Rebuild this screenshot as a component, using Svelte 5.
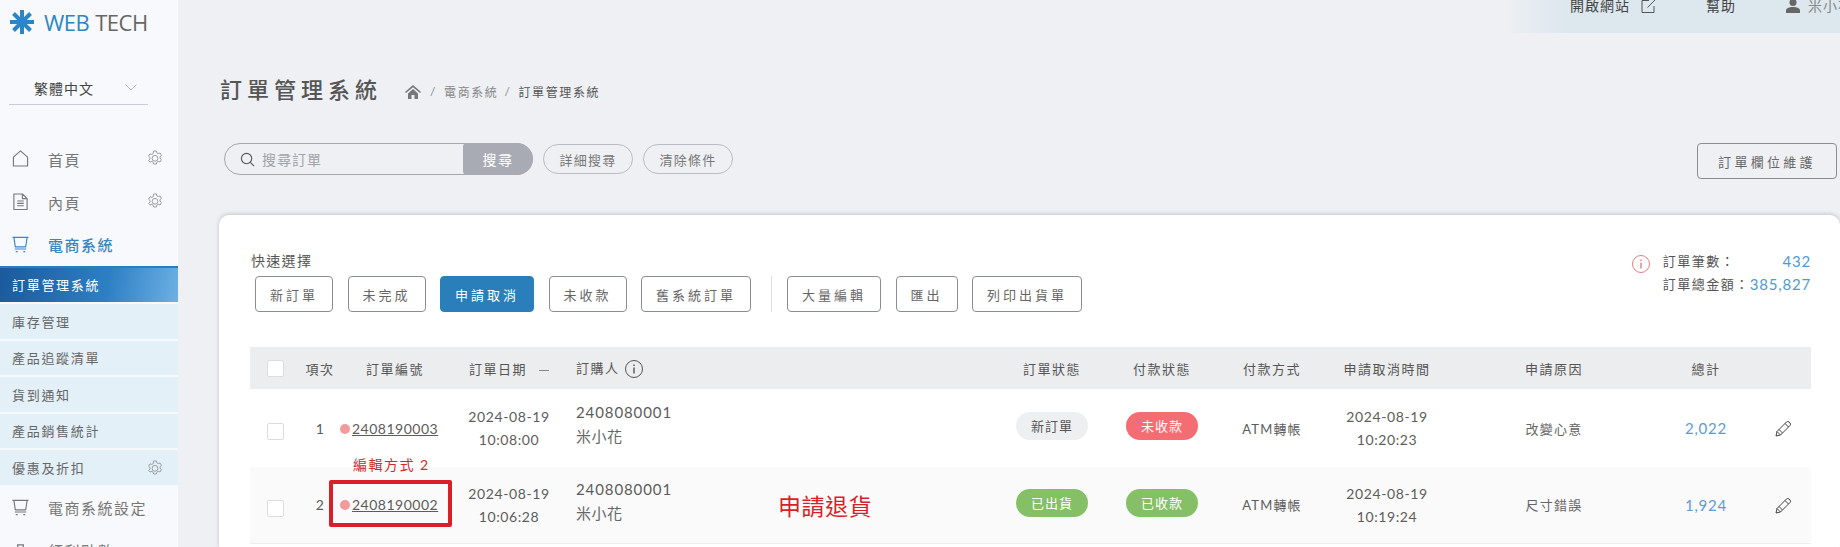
<script>
  const topMenu = [
    { name: '首頁', icon: 'home', gear: true },
    { name: '內頁', icon: 'doc', gear: true },
    { name: '電商系統', icon: 'cart', open: true }
  ];
  const subMenu = [
    { name: '訂單管理系統', active: true },
    { name: '庫存管理' },
    { name: '產品追蹤清單' },
    { name: '貨到通知' },
    { name: '產品銷售統計' },
    { name: '優惠及折扣', gear: true }
  ];
  const quick = ['新訂單', '未完成', '申請取消', '未收款', '舊系統訂單'];
  const tools = ['大量編輯', '匯出', '列印出貨單'];
  const rows = [
    {
      no: 1, order: '2408190003', date: '2024-08-19', time: '10:08:00', buyer: '2408080001', name: '米小花',
      status: '新訂單', statusCls: 'gray', pay: '未收款', payCls: 'red', method: 'ATM轉帳',
      cdate: '2024-08-19', ctime: '10:20:23', reason: '改變心意', total: '2,022'
    },
    {
      no: 2, order: '2408190002', date: '2024-08-19', time: '10:06:28', buyer: '2408080001', name: '米小花',
      status: '已出貨', statusCls: 'green', pay: '已收款', payCls: 'green', method: 'ATM轉帳',
      cdate: '2024-08-19', ctime: '10:19:24', reason: '尺寸錯誤', total: '1,924', marked: true
    }
  ];
</script>

{#snippet gear()}
  <svg class="gear" viewBox="0 0 16 16" fill="none" stroke="#9a9da3" stroke-width="1">
    <path d="M6.6 1h2.8l.4 1.8 1.4.8 1.8-.6 1.4 2.4-1.4 1.3v1.6l1.4 1.3-1.4 2.4-1.8-.6-1.4.8-.4 1.8H6.6l-.4-1.8-1.4-.8-1.8.6L1.6 10.4 3 9.1V7.5L1.6 6.2 3 3.8l1.8.6 1.4-.8z" />
    <circle cx="8" cy="8.3" r="2.9" />
  </svg>
{/snippet}

{#snippet menuIcon(kind)}
  <svg class="micon" viewBox="0 0 18 18" fill="none" stroke="currentColor" stroke-width="1.200" stroke-linejoin="round">
    {#if kind === 'home'}
      <path d="M1.500 7.500L9 1l7.500 6.500V17h-15z" />
    {:else if kind === 'doc'}
      <path d="M2 1h9l5 5v11.500H2z M11 1v5h5 M5.500 8.500h7 M5.500 11h7 M5.500 13.500h7" />
    {:else}
      <path d="M.5 1.500h17 M2 1.500l1.500 10h11l1.500-10 M3 13.800h12 M4 16.500h2 M12 16.500h2" />
    {/if}
  </svg>
{/snippet}

<div class="page">
  <aside class="sidebar">
    <div class="logo">
      <svg class="logo-mark" viewBox="0 0 24 24" fill="none" stroke="#2c85c5" stroke-width="4">
        <path d="M12 0v24 M0 12h24 M3.500 3.500l17 17 M20.500 3.500l-17 17" />
      </svg>
      <span class="web">WEB</span><span class="tech">TECH</span>
    </div>

    <div class="lang">
      <span>繁體中文</span>
      <svg viewBox="0 0 12 7" fill="none" stroke="#b8bcc4" stroke-width="1"><path d="M.5.500L6 6l5.500-5.500" /></svg>
    </div>

    <nav class="menu">
      {#each topMenu as item}
        <div class="menu-item" class:open={item.open}>
          {@render menuIcon(item.icon)}
          <span>{item.name}</span>
          {#if item.gear}{@render gear()}{/if}
        </div>
      {/each}

      <ul class="submenu">
        {#each subMenu as item}
          <li class:active={item.active}>
            <span>{item.name}</span>
            {#if item.gear}{@render gear()}{/if}
          </li>
        {/each}
      </ul>

      <div class="menu-item">
        {@render menuIcon('cart')}
        <span>電商系統設定</span>
      </div>
      <div class="menu-item">
        <svg class="micon" viewBox="0 0 18 18" fill="none" stroke="currentColor" stroke-width="1.300">
          <path d="M1 6h16v11H1z M6 6V3h6v3 M1 10h16" />
        </svg>
        <span>紅利點數</span>
      </div>
    </nav>
  </aside>

  <main class="main">
    <div class="topbar">
      <span class="top-link">開啟網站
        <svg viewBox="0 0 15 15" fill="none" stroke="#555" stroke-width="1"><path d="M8 1.500H1v12h12V7 M6.500 8.500L14 1" /></svg>
      </span>
      <span class="top-link help">幫助</span>
      <span class="top-user">
        <svg viewBox="0 0 14 14" fill="#666"><circle cx="7" cy="3.500" r="3.500" /><path d="M0 14v-2.500C0 9.500 3 8 7 8s7 1.500 7 3.500V14z" /></svg>
        米小花
      </span>
    </div>

    <div class="heading">
      <h1>訂單管理系統</h1>
      <div class="crumbs">
        <svg viewBox="0 0 16 14" fill="#777"><path d="M8 0l8 7-1 1-7-5.800L1 8 0 7z M3 8.500L8 4l5 4.500V14H9.500v-4h-3v4H3z" /></svg>
        <span class="sep">/</span>
        <span class="crumb">電商系統</span>
        <span class="sep">/</span>
        <span class="crumb current">訂單管理系統</span>
      </div>
    </div>

    <div class="toolbar">
      <div class="search">
        <div class="search-input">
          <svg viewBox="0 0 16 16" fill="none" stroke="#555" stroke-width="1.200"><circle cx="7" cy="7" r="5.500" /><path d="M11 11l4 4" /></svg>
          <span>搜尋訂單</span>
        </div>
        <div class="search-btn">搜尋</div>
      </div>
      <button class="pill">詳細搜尋</button>
      <button class="pill">清除條件</button>
      <button class="outline columns">訂單欄位維護</button>
    </div>

    <section class="card">
      <div class="card-top">
        <div class="quick">
          <div class="quick-label">快速選擇</div>
          <div class="quick-btns">
            {#each quick as q}
              <button class="outline" class:current={q === '申請取消'}>{q}</button>
            {/each}
            <span class="divider"></span>
            {#each tools as t}
              <button class="outline">{t}</button>
            {/each}
          </div>
        </div>
        <div class="summary">
          <svg viewBox="0 0 18 18" fill="none" stroke="#e07f84" stroke-width="1"><circle cx="9" cy="9" r="8.500" /><path d="M9 7.500v6 M9 4.500v1.500" stroke-width="1.400" /></svg>
          <dl>
            <dt>訂單筆數：</dt><dd>432</dd>
            <dt>訂單總金額：</dt><dd>385,827</dd>
          </dl>
        </div>
      </div>

      <table>
        <colgroup>
          <col style="width:50px" /><col style="width:40px" /><col style="width:110px" /><col style="width:118px" />
          <col style="width:432px" /><col style="width:104px" /><col style="width:116px" /><col style="width:104px" />
          <col style="width:126px" /><col style="width:208px" /><col style="width:96px" /><col style="width:57px" />
        </colgroup>
        <thead>
          <tr>
            <th><span class="check"></span></th>
            <th>項次</th>
            <th>訂單編號</th>
            <th>訂單日期 <span class="sort"></span></th>
            <th class="left">訂購人
              <svg class="info" viewBox="0 0 18 18" fill="none" stroke="#555" stroke-width="1"><circle cx="9" cy="9" r="8.500" /><path d="M9 7.500v6 M9 4.500v1.500" stroke-width="1.400" /></svg>
            </th>
            <th>訂單狀態</th>
            <th>付款狀態</th>
            <th>付款方式</th>
            <th>申請取消時間</th>
            <th>申請原因</th>
            <th>總計</th>
            <th></th>
          </tr>
        </thead>
        <tbody>
          {#each rows as r}
            <tr class:marked={r.marked}>
              <td><span class="check"></span></td>
              <td class="no">{r.no}</td>
              <td class="order-cell">
                {#if r.marked}
                  <span class="note-label">編輯方式 2</span>
                  <span class="note-box"></span>
                {/if}
                <span class="dot"></span><span class="order">{r.order}</span>
              </td>
              <td class="stack">{r.date}<br />{r.time}</td>
              <td class="left buyer-cell">
                <div class="buyer">{r.buyer}</div>
                <div class="buyer-name">{r.name}</div>
                {#if r.marked}<span class="note-refund">申請退貨</span>{/if}
              </td>
              <td><span class="badge {r.statusCls}">{r.status}</span></td>
              <td><span class="badge {r.payCls}">{r.pay}</span></td>
              <td class="plain">{r.method}</td>
              <td class="stack">{r.cdate}<br />{r.ctime}</td>
              <td class="plain reason">{r.reason}</td>
              <td class="total">{r.total}</td>
              <td>
                <svg class="edit" viewBox="0 0 16 16" fill="none" stroke="#444" stroke-width="1">
                  <path d="M1 15l1-4.500L11.500 1a1.800 1.800 0 0 1 2.500 0l1 1a1.800 1.800 0 0 1 0 2.500L5.500 14z M2 10.500L5.500 14 M4 8.500L7.500 12 M10 2.500l3.500 3.500" />
                </svg>
              </td>
            </tr>
          {/each}
        </tbody>
      </table>
    </section>
  </main>
</div>

<style>
  :global(body) {
    margin: 0;
    background: #eef0f4;
  }

  .page {
    display: flex;
    width: 1840px;
    height: 547px;
    overflow: hidden;
    font-family: Lato, "Noto Sans CJK TC", sans-serif;
    color: #555;
  }

  /* sidebar */
  .sidebar {
    flex: 0 0 178px;
    background: #f7f9fc;
    overflow: hidden;
  }

  .logo {
    display: flex;
    align-items: center;
    height: 44px;
    padding-left: 10px;
    font-family: "Open Sans", sans-serif;
    font-size: 22px;
    letter-spacing: -0.5px;
  }

  .logo-mark {
    width: 24px;
    height: 24px;
    margin-right: 10px;
  }

  .web {
    color: #2e86c1;
    margin-right: 6px;
  }

  .tech {
    color: #666;
  }

  .lang {
    display: flex;
    align-items: center;
    justify-content: space-between;
    box-sizing: border-box;
    width: 139px;
    height: 34px;
    margin: 27px 0 0 9px;
    padding: 0 11px 0 25px;
    border-bottom: 1px solid #c9ccd4;
    font-size: 14px;
    letter-spacing: 1px;
    color: #444;
  }

  .lang svg {
    width: 12px;
    height: 7px;
  }

  .menu {
    margin-top: 32px;
  }

  .menu-item {
    display: flex;
    align-items: center;
    position: relative;
    height: 43px;
    padding-left: 12px;
    font-size: 15px;
    letter-spacing: 1.500px;
    color: #777;
  }

  .menu-item span {
    margin-left: 19px;
    margin-top: 1px;
  }

  .menu-item.open {
    color: #3a87bd;
    font-weight: 500;
  }

  .menu-item.open span {
    margin-top: 0;
  }

  .micon {
    width: 17px;
    height: 17px;
    flex: none;
  }

  .gear {
    position: absolute;
    right: 15px;
    top: 13px;
    width: 16px;
    height: 16px;
  }

  .submenu {
    list-style: none;
    margin: 0 0 -1px;
    padding: 0;
  }

  .submenu li {
    display: flex;
    align-items: center;
    position: relative;
    box-sizing: border-box;
    height: 34.500px;
    margin-bottom: 2px;
    padding-left: 12px;
    background: #e3f0f8;
    font-size: 13px;
    letter-spacing: 1.700px;
    color: #666;
  }

  .submenu li .gear {
    top: 10px;
  }

  .submenu li.active {
    height: 36px;
    padding-bottom: 1px;
    background: linear-gradient(100deg, #1b5a9b 0%, #2d7fc4 60%, #6db0e4 100%);
    border-top: 2px solid #2a7fba;
    color: #fff;
  }

  /* main column */
  .main {
    flex: 1;
    min-width: 0;
  }

  .topbar {
    display: flex;
    align-items: flex-end;
    justify-content: flex-end;
    box-sizing: border-box;
    width: 335px;
    height: 33px;
    margin-left: auto;
    padding-bottom: 17px;
    overflow: hidden;
    background: linear-gradient(90deg, rgba(220, 231, 238, 0) 0%, #dce7ee 18%);
    font-size: 14px;
    letter-spacing: 1px;
    line-height: 20px;
    color: #444;
    white-space: nowrap;
  }

  .top-link {
    display: flex;
    align-items: center;
    gap: 11px;
    margin-right: 50px;
  }

  .top-link svg {
    width: 15px;
    height: 15px;
  }

  .top-user {
    display: flex;
    align-items: center;
    gap: 8px;
    width: 54px;
    color: #888;
  }

  .top-user svg {
    flex: none;
    width: 14px;
    height: 14px;
  }

  .heading {
    display: flex;
    align-items: center;
    height: 44px;
    margin-top: 33px;
    padding-left: 42px;
  }

  h1 {
    margin: 0;
    font-size: 22px;
    font-weight: 500;
    letter-spacing: 5px;
    color: #555;
  }

  .crumbs {
    display: flex;
    align-items: center;
    margin: 7px 0 0 23px;
    font-size: 12px;
    letter-spacing: 1.600px;
    color: #888;
  }

  .crumbs svg {
    width: 16px;
    height: 14px;
    margin-right: 9px;
  }

  .sep {
    margin-right: 7px;
  }

  .crumb {
    margin-right: 6px;
  }

  .crumb.current {
    color: #555;
  }

  .toolbar {
    display: flex;
    align-items: flex-start;
    height: 36px;
    margin-top: 33px;
    padding: 0 3px 0 46px;
  }

  .search {
    display: flex;
    box-sizing: border-box;
    width: 309px;
    height: 32px;
    border: 1px solid #a4a7ad;
    border-radius: 16px;
  }

  .search-input {
    display: flex;
    align-items: center;
    gap: 7px;
    flex: 1;
    padding-left: 15px;
    font-size: 14px;
    letter-spacing: 1px;
    color: #a0a3a9;
  }

  .search-input svg {
    width: 15px;
    height: 15px;
  }

  .search-btn {
    display: flex;
    align-items: center;
    justify-content: center;
    width: 70px;
    margin: -1px;
    background: #a8abb3;
    border-radius: 4px 16px 16px 4px;
    font-size: 14px;
    letter-spacing: 1.500px;
    color: #fff;
  }

  button {
    font-family: inherit;
    background: #fff;
    cursor: pointer;
  }

  .pill {
    width: 90px;
    height: 30px;
    margin: 1px 0 0 10px;
    padding: 0;
    background: transparent;
    border: 1px solid #b9bcc2;
    border-radius: 15px;
    font-size: 13px;
    letter-spacing: 1.200px;
    color: #777;
  }

  .outline {
    height: 36px;
    padding: 0 14px;
    border: 1px solid #8a8d93;
    border-radius: 4px;
    font-size: 13px;
    letter-spacing: 3px;
    color: #666;
  }

  .columns {
    width: 140px;
    margin-left: auto;
    background: transparent;
    letter-spacing: 3.300px;
  }

  .card {
    margin: 36px 0 0 41px;
    height: 340px;
    background: #fff;
    border-radius: 10px;
    box-shadow: 0 -1px 4px rgba(0, 0, 0, 0.18);
  }

  .card-top {
    display: flex;
    justify-content: space-between;
    height: 132px;
    padding: 36px 29px 0 32px;
    box-sizing: border-box;
  }

  .quick-label {
    font-size: 14px;
    letter-spacing: 1.300px;
    line-height: 20px;
    color: #555;
  }

  .quick-btns {
    display: flex;
    align-items: center;
    gap: 14.500px;
    margin: 5px 0 0 4px;
  }

  .quick-btns .current {
    background: #2a7fba;
    border-color: #2a7fba;
    color: #fff;
  }

  .divider {
    width: 1px;
    height: 36px;
    margin: 0 1px 0 5px;
    background: #dcdee2;
  }

  .summary {
    display: flex;
    align-items: flex-start;
    gap: 13px;
    margin-top: -1px;
  }

  .summary svg {
    width: 18px;
    height: 18px;
    margin-top: 5px;
  }

  dl {
    display: grid;
    grid-template-columns: auto 1fr;
    margin: 0;
    font-size: 13px;
    line-height: 23px;
    letter-spacing: 1.500px;
    color: #555;
  }

  dd {
    margin: 0;
    text-align: right;
    font-size: 15px;
    letter-spacing: 0.800px;
    color: #4f9bd1;
  }

  /* table */
  table {
    width: 1561px;
    margin-left: 31px;
    border-collapse: collapse;
    table-layout: fixed;
  }

  th {
    height: 42px;
    padding: 0;
    background: #ecedef;
    font-size: 13px;
    font-weight: 400;
    letter-spacing: 1.500px;
    color: #555;
    text-align: center;
  }

  td {
    box-sizing: border-box;
    height: 76px;
    padding: 0;
    font-size: 14px;
    text-align: center;
    letter-spacing: 0.600px;
    color: #5c5c5c;
  }

  tbody tr:first-child td {
    height: 78px;
  }

  tr.marked td {
    background: #fafafa;
    border-bottom: 1px solid #eceded;
  }

  .left {
    padding-left: 8px;
    text-align: left;
  }

  .check {
    display: inline-block;
    box-sizing: border-box;
    width: 17px;
    height: 17px;
    background: #fff;
    border: 1px solid #dcdde0;
    border-radius: 2px;
    vertical-align: middle;
    position: relative;
    top: 3px;
  }

  th .check {
    top: 0;
  }

  .sort {
    display: inline-block;
    width: 10px;
    height: 1px;
    margin-left: 7px;
    background: #888;
    vertical-align: middle;
  }

  .info {
    width: 18px;
    height: 18px;
    margin-left: 1px;
    vertical-align: middle;
  }

  .order-cell {
    position: relative;
    padding-right: 12px;
    white-space: nowrap;
  }

  .dot {
    display: inline-block;
    width: 10px;
    height: 10px;
    margin-right: 2px;
    background: #f39a9c;
    border-radius: 50%;
  }

  .order {
    text-decoration: underline;
    letter-spacing: 0.500px;
  }

  .note-box {
    position: absolute;
    left: -11px;
    top: 13px;
    width: 123px;
    height: 47px;
    box-sizing: border-box;
    border: 4px solid #dc1e28;
    border-radius: 2px;
  }

  .note-label {
    position: absolute;
    left: 13px;
    top: -12px;
    font-size: 14px;
    letter-spacing: 1.500px;
    line-height: 20px;
    color: #cf2a2f;
  }

  .stack {
    line-height: 23px;
  }

  .buyer-cell {
    position: relative;
    padding-bottom: 8px;
  }

  .buyer {
    font-size: 15px;
    letter-spacing: 0.900px;
    line-height: 24px;
  }

  .buyer-name {
    font-size: 15px;
    letter-spacing: 0.500px;
    line-height: 24px;
    color: #666;
  }

  .note-refund {
    position: absolute;
    left: 210px;
    top: 24px;
    font-size: 23px;
    line-height: 30px;
    color: #d81f26;
  }

  .badge {
    display: inline-block;
    width: 72px;
    height: 28px;
    line-height: 28px;
    border-radius: 14px;
    font-size: 13px;
    letter-spacing: 1px;
    position: relative;
    top: -2px;
  }

  .gray {
    background: #eeeff1;
    color: #555;
  }

  .red {
    background: #f46d72;
    color: #fff;
  }

  .green {
    background: #85c066;
    color: #fff;
  }

  .plain {
    font-size: 13px;
    letter-spacing: 1.200px;
  }

  .reason {
    color: #666;
  }

  .total {
    font-size: 15px;
    letter-spacing: 0.800px;
    color: #5f9bcf;
  }

  .edit {
    width: 16px;
    height: 16px;
    vertical-align: middle;
  }
</style>
